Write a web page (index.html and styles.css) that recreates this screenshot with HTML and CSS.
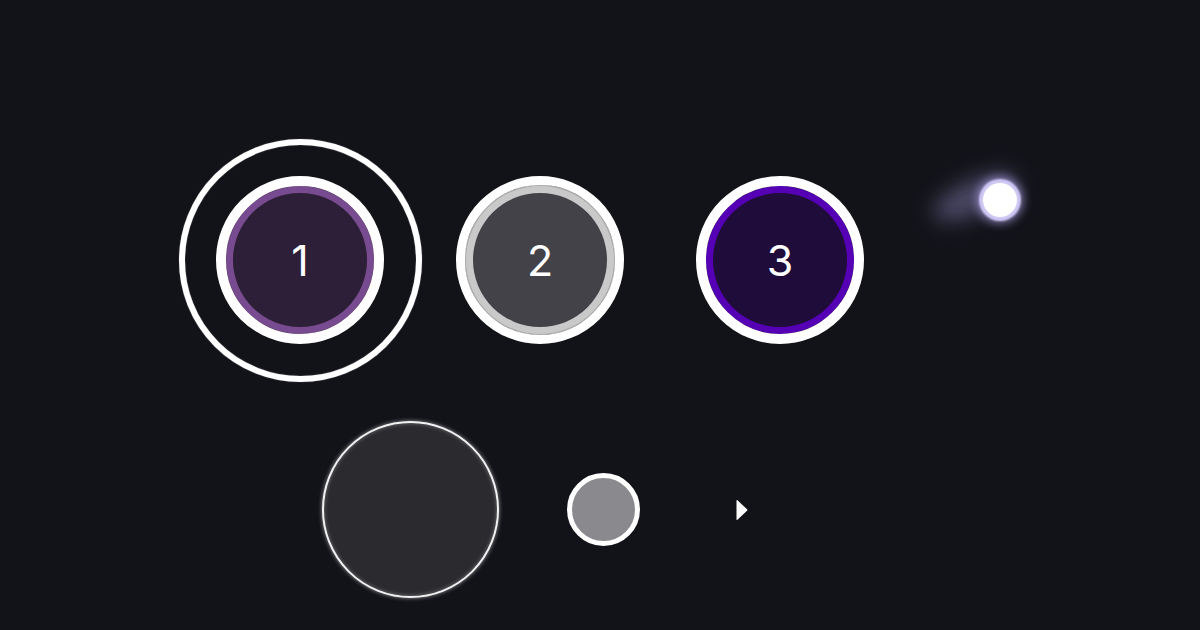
FILE: index.html
```
<!DOCTYPE html>
<html lang="en">
<head>
<meta charset="utf-8">
<title>Steps</title>
<link rel="stylesheet" href="styles.css">
</head>
<body>
<main class="stage">
  <section class="steps">
    <div class="slot">
      <div class="halo">
        <div class="step step-active"><span class="num">1</span></div>
      </div>
    </div>
    <div class="slot">
      <div class="step step-neutral"><span class="num">2</span></div>
    </div>
    <div class="slot">
      <div class="step step-violet"><span class="num">3</span></div>
    </div>
  </section>
  <section class="controls">
    <div class="big-button"></div>
    <div class="small-button"></div>
    <svg class="play" width="12" height="22" viewBox="0 0 12 22" aria-hidden="true">
      <path d="M1.5 1.2 L11 10.2 Q11.8 11 11 11.8 L1.5 20.8 Q0.5 21.6 0.5 20.3 L0.5 1.7 Q0.5 0.4 1.5 1.2 Z" fill="#ffffff"/>
    </svg>
  </section>
  <div class="glow-trail"></div>
  <div class="glow-dot"></div>
</main>
</body>
</html>
```
FILE: styles.css
```
html, body {
  margin: 0;
  padding: 0;
  background: #121319;
  width: 1200px;
  height: 630px;
  overflow: hidden;
  font-family: "Inter", "Open Sans", sans-serif;
}

.stage {
  position: relative;
  width: 1200px;
  height: 630px;
}

.steps {
  display: flex;
  padding-left: 180px;
  padding-top: 139px;
  height: 242px;
}

.slot {
  width: 240px;
  height: 242px;
  display: flex;
  align-items: center;
  justify-content: center;
}

.halo {
  flex: none;
  width: 243px;
  height: 243px;
  box-sizing: border-box;
  border: 6px solid #ffffff;
  border-radius: 50%;
  box-shadow: 0 0 1px rgba(255, 255, 255, 0.6), inset 0 0 1px rgba(255, 255, 255, 0.6);
  display: flex;
  align-items: center;
  justify-content: center;
}

.step {
  flex: none;
  width: 168px;
  height: 168px;
  box-sizing: border-box;
  border-radius: 50%;
  border: 10px solid #ffffff;
  display: flex;
  align-items: center;
  justify-content: center;
}

.step-active {
  background: #2d1f38;
  box-shadow: inset 0 0 0 7px #784a8f;
}

.step-neutral {
  border-width: 9px;
  background: #434248;
  box-shadow: inset 0 0 0 1px #a9a9ab, inset 0 0 0 8px #c9c9c9;
}

.step-violet {
  background: #200c3b;
  box-shadow: inset 0 0 0 7px #5500b4;
}

.num {
  color: #ffffff;
  font-size: 43px;
  font-weight: 400;
  line-height: 1;
}

.controls {
  display: flex;
  align-items: center;
  padding-left: 322px;
  margin-top: 40px;
  height: 177px;
}

.big-button {
  width: 177px;
  height: 177px;
  box-sizing: border-box;
  border-radius: 50%;
  background: #2a2a2f;
  border: 2px solid #f2f2f2;
  box-shadow: 0 0 4px rgba(255, 255, 255, 0.55), inset 0 0 4px rgba(255, 255, 255, 0.35);
}

.small-button {
  margin-left: 68px;
  width: 73px;
  height: 73px;
  box-sizing: border-box;
  border-radius: 50%;
  background: #8a898e;
  border: 5px solid #ffffff;
}

.play {
  margin-left: 96px;
  display: block;
}

.glow-trail {
  position: absolute;
  left: 930px;
  top: 180px;
  width: 90px;
  height: 34px;
  border-radius: 50%;
  background: rgba(165, 155, 220, 0.38);
  filter: blur(10px);
  transform: rotate(-24deg);
}

.glow-dot {
  position: absolute;
  left: 983px;
  top: 183px;
  width: 34px;
  height: 34px;
  border-radius: 50%;
  background: #ffffff;
  box-shadow: 0 0 2px 4px #d0c8f5, 0 0 8px 7px rgba(170, 160, 230, 0.6);
}
```
